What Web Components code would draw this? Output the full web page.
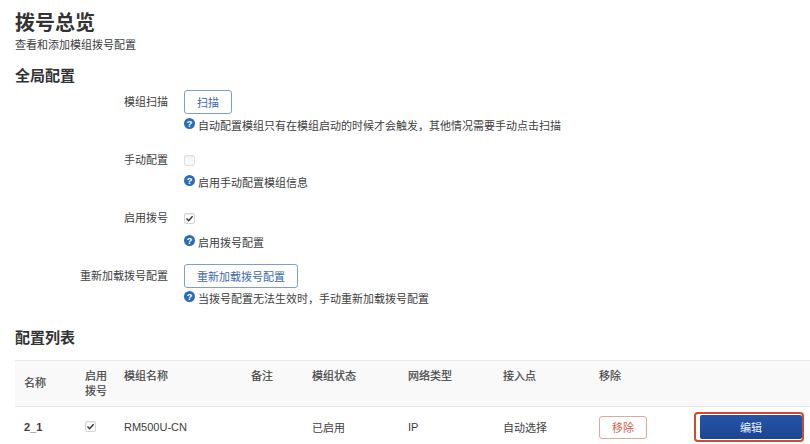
<!DOCTYPE html>
<html lang="zh">
<head>
<meta charset="utf-8">
<title>拨号总览</title>
<style>
html, body { margin: 0; background: #fff; }
body { width: 810px; height: 444px; overflow: hidden; font-family: "Liberation Sans", "Noto Sans CJK SC", sans-serif; color: #404040; }
</style>
</head>
<body>
<dial-overview></dial-overview>

<template id="tpl-check">
<style>
:host { display: inline-block; width: 11px; height: 11px; }
.box { box-sizing: border-box; display: block; width: 11px; height: 11px; border: 1px solid #d4d4d4; border-radius: 2px; background: #fff; box-shadow: inset 0 1px 1px #eee; }
svg { display: none; width: 9px; height: 9px; }
:host([checked]) svg { display: block; }
:host([disabled]) .box { background: #f8f8f8; border-color: #e0e0e0; }
</style>
<span class="box"><svg viewBox="0 0 9 9"><path d="M1.5 4.6 3.6 6.8 7.6 2.2" fill="none" stroke="#333" stroke-width="1.4"/></svg></span>
</template>

<template id="tpl-button">
<style>
:host { display: inline-block; }
.btn { box-sizing: border-box; display: flex; align-items: center; justify-content: center; height: var(--h, 24px); padding: 0 var(--px, 12px); border: 1px solid #7f9fc9; border-radius: 3px; background: #fff; color: #3d68a8; font-size: 11px; }
:host([kind="danger"]) .btn { border-color: #e0a79c; color: #d9604c; }
:host([kind="primary"]) .btn { border: 0; border-radius: 2px; color: #eef2f9; background: linear-gradient(#2554a8, #1c4691); }
</style>
<span class="btn"><slot></slot></span>
</template>

<template id="tpl-row">
<style>
:host { display: grid; grid-template-columns: 153px 1fr; column-gap: 16px; font-size: 11px; color: #404040; }
.label { text-align: right; line-height: var(--lh, 24px); white-space: nowrap; }
.hint { display: flex; align-items: center; gap: 3px; height: 14px; margin-top: var(--gap, 3px); white-space: nowrap; }
svg { width: 11px; height: 11px; flex: none; margin-top: -3px; }
.ctl { display: flex; align-items: center; height: var(--lh, 24px); }
</style>
<div class="label"><slot name="label"></slot></div>
<div>
  <div class="ctl"><slot></slot></div>
  <div class="hint"><svg viewBox="0 0 12 12"><circle cx="6" cy="6" r="6" fill="#2b6cb8"/><text x="6" y="9.6" text-anchor="middle" font-size="10" font-weight="700" font-family="Liberation Sans" fill="#fff">?</text></svg><span><slot name="hint"></slot></span></div>
</div>
</template>

<template id="tpl-table">
<style>
:host { display: block; width: 795px; font-size: 11px; color: #404040; }
.grid { display: grid; grid-template-columns: 70px 39px 127px 61px 96px 95px 96px 101px 110px; }
.head { height: 47px; box-sizing: border-box; background: #f9f9f9; border-top: 1px solid #e6e6e6; border-bottom: 1px solid #e6e6e6; color: #444; }
.head > div { padding-top: 8px; line-height: 15px; -webkit-text-stroke: .2px #444; }
.head > .mid { padding: 15px 0 0 9px; }
.body { height: 40px; align-items: center; }
.body b { padding-left: 9px; font-weight: 700; }
</style>
<div class="grid head">
  <div class="mid">名称</div><div>启用<br>拨号</div><div>模组名称</div><div>备注</div><div>模组状态</div><div>网络类型</div><div>接入点</div><div>移除</div><div></div>
</div>
<div class="grid body">
  <b>2_1</b>
  <div><x-check checked></x-check></div>
  <div>RM500U-CN</div>
  <div></div>
  <div>已启用</div>
  <div>IP</div>
  <div>自动选择</div>
  <div><x-button kind="danger" style="--px:12px;--h:23px">移除</x-button></div>
  <edit-mark></edit-mark>
</div>
</template>

<template id="tpl-edit">
<style>
:host { display: block; width: 110px; height: 30px; margin-left: -6px; box-sizing: border-box; border: 2px solid #d2492c; border-radius: 4px; padding: 1px 0 1px 4px; }
x-button { display: block; }
</style>
<x-button kind="primary" style="--h:24px">编辑</x-button>
</template>

<template id="tpl-page">
<style>
:host { display: block; padding: 12px 0 0 15px; }
h1 { margin: 0; font-size: 20px; line-height: 22px; font-weight: 700; color: #333; }
p { margin: 4px 0 0; font-size: 11px; line-height: 14px; color: #404040; }
h2 { margin: 0; font-size: 15px; line-height: 18px; font-weight: 700; color: #333; }
.global { margin-top: 15px; }
.rows { margin-top: 5px; display: flex; flex-direction: column; }
.list { margin-top: 24px; }
x-table { margin-top: 13px; }
</style>
<h1>拨号总览</h1>
<p>查看和添加模组拨号配置</p>
<h2 class="global">全局配置</h2>
<div class="rows">
  <form-row style="--lh:24px;--gap:4px">
    <span slot="label">模组扫描</span>
    <x-button style="--px:12px">扫描</x-button>
    <span slot="hint">自动配置模组只有在模组启动的时候才会触发，其他情况需要手动点击扫描</span>
  </form-row>
  <form-row style="--lh:14px;--gap:8px;margin-top:21px">
    <span slot="label">手动配置</span>
    <x-check disabled></x-check>
    <span slot="hint">启用手动配置模组信息</span>
  </form-row>
  <form-row style="--lh:14px;--gap:10px;margin-top:22px">
    <span slot="label">启用拨号</span>
    <x-check checked></x-check>
    <span slot="hint">启用拨号配置</span>
  </form-row>
  <form-row style="--lh:24px;margin-top:15px">
    <span slot="label">重新加载拨号配置</span>
    <x-button style="--px:12px">重新加载拨号配置</x-button>
    <span slot="hint">当拨号配置无法生效时，手动重新加载拨号配置</span>
  </form-row>
</div>
<h2 class="list">配置列表</h2>
<x-table></x-table>
</template>

<script>
// every element just clones its template in an open shadow root
function define(tag, tplId) {
  customElements.define(tag, class extends HTMLElement {
    constructor() {
      super();
      this.attachShadow({ mode: 'open' });
      this.shadowRoot.append(document.getElementById(tplId).content.cloneNode(true));
    }
  });
}
define('x-check', 'tpl-check');
define('x-button', 'tpl-button');
define('form-row', 'tpl-row');
define('edit-mark', 'tpl-edit');
define('x-table', 'tpl-table');
define('dial-overview', 'tpl-page');
</script>
</body>
</html>
